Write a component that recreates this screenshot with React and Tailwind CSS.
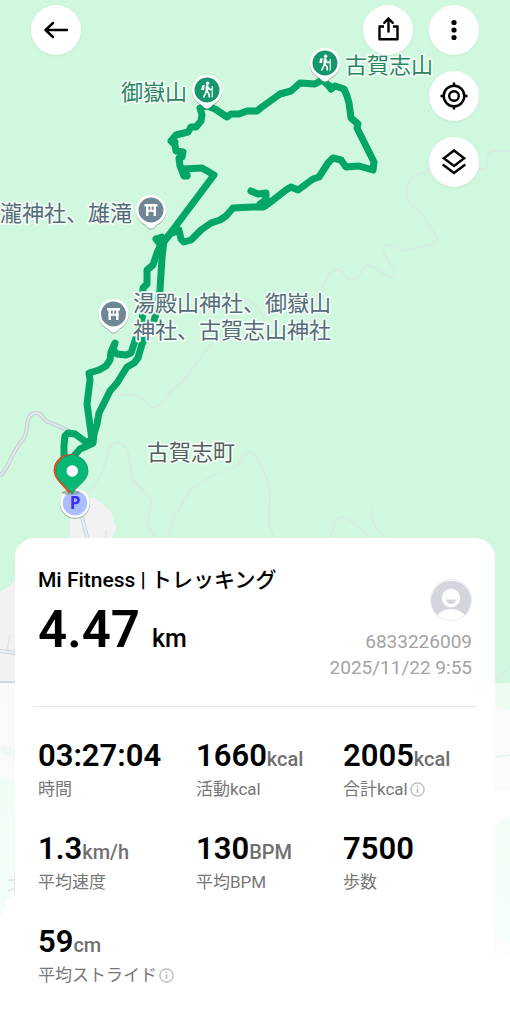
import React from "react";

const round =
  "flex size-[50px] items-center justify-center rounded-full bg-white text-black shadow-sm shadow-black/5";

const route = [
  "M207 106 L200 108 L202 115 L201 121 L196 127 L191 127 L188 132 L176 135 L171 141 L175 145 L176 151 L183 152 L182 157 L179 158 L180 166 L184 176 L187 176 L182 169 L202 168 L214 175 L163 243",
  "M207 106 L215 109 L227 117 L231 114 L239 114 L247 111 L257 111 L262 107 L280 94 L291 91 L300 83 L315 84 L322 80 L328 85 L331 89 L335 86 L344 89 L347 96 L349 103 L351 118 L358 124 L357 128 L367 148 L374 162 L373 170 L359 166 L346 167 L341 160 L333 158 L328 163 L319 177 L313 179 L298 190 L291 187 L286 190 L268 204 L263 207 L252 207 L233 208 L226 216 L220 220 L211 223 L201 230 L191 240 L184 242 L181 239 L179 230 L170 234 L166 239",
  "M251 191 L258 194 L266 193 L266 200 L260 204 L265 206 L266 195",
  "M157 239 L162 237 L160 243 L163 240 L157 253 L153 265 L147 270 L147 284 L143 288 L143 310 L142 322 L136 338 L131 353 L126 355 L117 354 L113 350 L115 343 L111 352 L110 360 L106 366 L99 370 L89 373 L90 380 L87 404 L92 440",
  "M164 240 L162 258 L160 290 L155 318 L148 331 L142 344 L138 358 L134 363 L127 367 L117 383 L110 391 L105 401 L99 413 L97 424 L94 434 L93 443 L89 445 L80 449 L72 458",
  "M92 440 L86 442 L75 434 L68 433 L65 436 L64 445 L64 460",
  "M330 86 L331 89 M156 239 L160 244 M184 175 L187 175 M175 142 L172 141",
];

const trails = [
  "M510 151 H495 Q489 151 487 158 L487 167 L483 169 H472 M430 172 Q416 172 410 180 Q403 192 410 204 Q424 214 433 231 Q442 241 429 245 L404 251 Q390 243 384 246 Q381 253 394 269 Q398 279 387 276 Q374 266 367 265 Q364 267 360 275 Q353 284 346 277 Q338 263 328 276 L310 317",
  "M245 299 Q256 302 262 315 L270 330 M238 313 Q214 340 205 352 Q192 370 185 379 L169 393 Q156 414 149 405 Q139 394 130 395 L106 395 L98 387 L92 379",
  "M89 492 Q105 474 109 449 Q119 434 128 452 L133 479 Q142 491 152 500 L147 524 L156 538",
  "M168 538 L173 519 L190 491 Q203 477 238 466 Q244 450 253 452 Q267 473 270 490 L269 525 L275 538",
  "M330 538 Q336 515 343 517 Q359 525 371 538 M372 506 Q370 528 386 538 M495 682 L510 667",
];

const pinShape =
  "M0 18.500 C-2.500 18.500 -4 16.500 -6 14.500 C-12 11 -15 7 -15 0 A15 15 0 0 1 15 0 C15 7 12 11 6 14.500 C4 16.500 2.500 18.500 0 18.500Z";

function Pin({ x, y, color, children }) {
  return (
    <g transform={`translate(${x} ${y})`}>
      <path d={pinShape} fill="#65736c" opacity=".55" transform="translate(0 1)" />
      <path d={pinShape} fill="#fff" />
      <circle r="12.5" fill={color} />
      {children}
    </g>
  );
}

function Hiker() {
  return (
    <g>
      <circle cx="0.600" cy="-6.800" r="1.700" fill="#fff" />
      <path d="M-4.800 -4.500 L-2.300 -5 L-3 0 L-5.800 0Z" fill="#fff" />
      <path d="M-.6 1.500 L-3.500 7.500 M-.3 1 L2 3.800 L2.400 7.500 M.8 -3.500 L2.200 -.6 L5 -.6" fill="none" stroke="#fff" strokeWidth="1.700" />
      <path d="M-1.200 -4.800 H1.200 L1 2.200 L-1.600 1.400Z" fill="#fff" />
      <path d="M5.200 -4 V7.500" stroke="#fff" strokeWidth="1.100" />
    </g>
  );
}

function Torii() {
  return (
    <g fill="none" stroke="#fff">
      <path d="M-6.500 -4.800 H6.500 M-3.800 -5 V6 M3.800 -5 V6" strokeWidth="2.400" />
      <path d="M-5 .8 H5" strokeWidth="2" />
      <path d="M0 -5 V.8" strokeWidth="1.400" />
    </g>
  );
}

function MapLayer() {
  return (
    <svg
      className="absolute inset-0 h-full w-full font-['Noto_Sans_CJK_JP',sans-serif]"
      viewBox="0 0 510 1024"
      preserveAspectRatio="xMidYMin slice"
      role="img"
      aria-label="ルート地図"
    >
      <defs>
        <linearGradient id="fade" x1="0" y1="0" x2="0" y2="1">
          <stop offset="0" stopColor="#fff" stopOpacity=".58" />
          <stop offset="1" stopColor="#fff" stopOpacity=".88" />
        </linearGradient>
      </defs>
      <rect width="510" height="1024" fill="#cff8de" />
      <path d="M70 497 L95 498 L111 511 L116 528 L112 540 V600 H70Z" fill="#f2f2f2" />
      <path d="M0 592 L16 581 V783 L0 775Z" fill="#f2f2f2" />
      <path d="M510 710 Q502 707 494 706 V791 H510Z" fill="#f2f2f2" />
      <path d="M494 791 H510 V817 L494 825Z M0 920 L8 899 L16 897 V1024 H0Z M494 961 L510 955 V1024 H494Z" fill="#fff" />
      <path d="M494 932 L510 940 V955 L494 961Z" fill="#f2f2f2" />
      <g fill="none" stroke="#d9e9e4" strokeWidth="1.300">
        {trails.map((d) => (
          <path key={d} d={d} />
        ))}
        <path d="M106 530 V538 M10 634 L7 650 M510 895 L495 922 L510 930" />
      </g>
      <path d="M0 476 C8 470 9 456 24 438 C29 430 24 413 37 413 C43 413 42 420 48 422 L70 431" fill="none" stroke="#bdcacc" strokeWidth="4" />
      <path d="M0 476 C8 470 9 456 24 438 C29 430 24 413 37 413 C43 413 42 420 48 422 L70 431" fill="none" stroke="#dfe7ea" strokeWidth="2.4" />
      <path d="M82 517 L88 541 M0 651 L16 653" fill="none" stroke="#c3d1da" strokeWidth="4" />
      <path d="M82 517 L88 541 M0 651 L16 653" fill="none" stroke="#e6edf1" strokeWidth="2.400" />
      <path d="M0 682 H16" fill="none" stroke="#c9d8e2" strokeWidth="2" />
      <path d="M0 748 L16 754" stroke="#d5e8e3" strokeWidth="9" />
      <path d="M494 757 L510 755" stroke="#c5dce5" strokeWidth="2" />
      <text x="7" y="892" fontSize="22" fill="#999">北</text>
      <rect y="683" width="510" height="341" fill="url(#fade)" />

      <g fill="none" stroke="#04a665" strokeWidth="7" strokeLinecap="round" strokeLinejoin="round">
        {route.map((d) => (
          <path key={d} d={d} />
        ))}
      </g>

      <g fontSize="22" stroke="#f1fcf5" strokeWidth="3.500" strokeLinejoin="round" paintOrder="stroke">
        <text x="121" y="100" fill="#2c8562">御嶽山</text>
        <text x="345" y="73" fill="#2c8562">古賀志山</text>
        <text x="0" y="221" fill="#566b79">瀧神社、雄滝</text>
        <text fill="#566b79">
          <tspan x="133" y="311">湯殿山神社、御嶽山</tspan>
          <tspan x="133" y="338">神社、古賀志山神社</tspan>
        </text>
        <text x="147" y="460" fill="#55605c">古賀志町</text>
      </g>

      <Pin x={207} y={90} color="#18966b"><Hiker /></Pin>
      <Pin x={325} y={63} color="#18966b"><Hiker /></Pin>
      <Pin x={151} y={210} color="#6f8794"><Torii /></Pin>
      <Pin x={113.5} y={314} color="#6f8794"><Torii /></Pin>

      <circle cx="75" cy="504" r="15" fill="#65736c" opacity=".5" />
      <circle cx="75" cy="503" r="14.7" fill="#fff" />
      <circle cx="75" cy="503" r="12.3" fill="#aabfff" />
      <text x="75" y="509" fontSize="17" textAnchor="middle" className="font-['Open_Sans',sans-serif] font-bold" fill="#3b2ff0">P</text>
      <ellipse cx="71" cy="492.500" rx="9" ry="2.5" fill="#8c9698" opacity=".7" />
      <path d="M69 493 C62 484 54 479 54 470 A15.500 15.500 0 0 1 85 470 C85 479 76 484 69 493Z" fill="#f4511e" stroke="#c9401b" strokeWidth=".8" />
      <path d="M72 494 C67 485 56 481 56 471 A16 16 0 0 1 88 471 C88 481 77 485 72 494Z" fill="#06b775" stroke="#05965f" strokeWidth=".8" />
      <circle cx="72.300" cy="471" r="5.800" fill="#fff" />
    </svg>
  );
}

function Glyph({ children }) {
  return (
    <svg width="28" height="28" viewBox="0 0 28 28" fill="none" stroke="currentColor" strokeWidth="2.400" aria-hidden="true">
      {children}
    </svg>
  );
}

function Info() {
  return (
    <button type="button" aria-label="詳細" className="text-[#b5b5b5]">
      <svg width="15" height="15" viewBox="0 0 15 15" fill="none" stroke="currentColor" strokeWidth="1.2">
        <circle cx="7.500" cy="7.500" r="6.600" />
        <path d="M7.500 6.500 V11 M7.500 3.800 V5.200" strokeWidth="1.5" />
      </svg>
    </button>
  );
}

const metrics = [
  { value: "03:27:04", unit: "", label: "時間" },
  { value: "1660", unit: "kcal", label: "活動kcal" },
  { value: "2005", unit: "kcal", label: "合計kcal", info: true },
  { value: "1.3", unit: "km/h", label: "平均速度" },
  { value: "130", unit: "BPM", label: "平均BPM" },
  { value: "7500", unit: "", label: "歩数" },
  { value: "59", unit: "cm", label: "平均ストライド", info: true },
];

export default function App() {
  return (
    <main className="relative flex min-h-screen flex-col overflow-hidden font-['Roboto','Noto_Sans_CJK_JP',sans-serif]">
      <MapLayer />

      <header className="relative flex items-start justify-between px-[31px] pt-[5px]">
        <button type="button" aria-label="戻る" className={round}>
          <Glyph>
            <path d="M25 14 H3.500 M11 7 L3.500 14 L11 21" strokeWidth="2.4" strokeLinecap="round" strokeLinejoin="round" />
          </Glyph>
        </button>
        <div className="flex items-start gap-4">
          <button type="button" aria-label="共有" className={round}>
            <Glyph>
              <path d="M10 10.500 H5.500 V23.200 H23.500 V10.500 H19" strokeLinejoin="round" />
              <path d="M14.500 15.500 V3 M10.300 6.800 L14.500 2.500 L18.700 6.800" strokeLinecap="round" />
            </Glyph>
          </button>
          <div className="flex flex-col gap-4">
            <button type="button" aria-label="メニュー" className={round}>
              <Glyph>
                <g fill="currentColor" stroke="none">
                  <circle cx="14" cy="6.500" r="2.600" />
                  <circle cx="14" cy="14" r="2.600" />
                  <circle cx="14" cy="21.500" r="2.600" />
                </g>
              </Glyph>
            </button>
            <button type="button" aria-label="現在地" className={round}>
              <Glyph>
                <circle cx="14" cy="14" r="10.300" />
                <circle cx="14" cy="14" r="4.800" />
                <path d="M14 .5 V4 M14 24 V27.500 M.5 14 H4 M24 14 H27.500" />
              </Glyph>
            </button>
            <button type="button" aria-label="レイヤー" className={round}>
              <Glyph>
                <path d="M14 2.500 L24.200 10.300 L14 18 L3.800 10.300Z" />
                <path d="M2.700 16.500 L14 25 L25.300 16.500" />
              </Glyph>
            </button>
          </div>
        </div>
      </header>

      <section className="relative mx-[15px] mt-auto rounded-t-[20px] bg-white px-[18px] pt-7 pb-[39px]">
        <div className="flex justify-between border-b border-[#e6e6e6] px-[5px] pb-[25px]">
          <div>
            <h1 className="text-[21px] leading-7 font-medium text-black">Mi Fitness | トレッキング</h1>
            <p className="mt-[10px] flex items-baseline gap-3 leading-[52px] text-black">
              <span className="text-[51px] font-semibold">4.47</span>
              <span className="text-[25px] font-medium">km</span>
            </p>
          </div>
          <div className="flex flex-col items-end pt-[13px] text-[19px] leading-[26px] text-[#a3a3a3]">
            <svg width="42" height="42" viewBox="0 0 42 42" className="mb-2" role="img" aria-label="プロフィール">
              <circle cx="21" cy="21" r="20.500" fill="#fff" stroke="#e9ebee" />
              <path d="M7 36 A20 20 0 1 1 35 36 Q29 30 21 30 Q13 30 7 36Z" fill="#d3d7dd" />
              <circle cx="21" cy="19" r="9.200" fill="#fff" />
              <path d="M16 20.500 H26 Q25 25 21 25 Q17 25 16 20.500Z" fill="#d3d7dd" />
            </svg>
            <span>6833226009</span>
            <time dateTime="2025-11-22T09:55">2025/11/22 9:55</time>
          </div>
        </div>

        <dl className="grid grid-cols-[158fr_147fr_129fr] gap-y-[34px] px-[5px] pt-[33px]">
          {metrics.map((m) => (
            <div key={m.label} className="flex flex-col-reverse gap-[7px] whitespace-nowrap">
              <dt className="flex h-5 items-center gap-[2px] text-[17px] leading-5 text-[#777]">
                <span>{m.label}</span>
                {m.info && <Info />}
              </dt>
              <dd className="flex h-8 items-baseline text-[31px] leading-8 font-semibold text-black">
                {m.value}
                <span className="text-xl leading-none font-medium text-[#707070]">{m.unit}</span>
              </dd>
            </div>
          ))}
        </dl>
      </section>
    </main>
  );
}
